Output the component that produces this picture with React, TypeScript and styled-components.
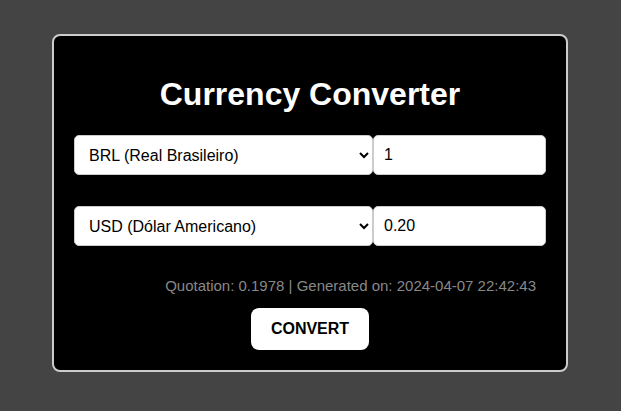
import React, { useState } from "react";
import styled, { createGlobalStyle } from "styled-components";

const GlobalStyle = createGlobalStyle`
  html, body {
    margin: 0;
    padding: 0;
    background: #444444;
    font-family: "Liberation Sans", Arial, sans-serif;
  }
`;

const Page = styled.div`
  padding: 34px 1px 0 0;
  display: flex;
  justify-content: center;
`;

const Card = styled.div`
  box-sizing: border-box;
  width: 516px;
  background: #000;
  border: 2px solid #cccccc;
  border-radius: 8px;
  padding: 20px 20px 20px;
  display: flex;
  flex-direction: column;
`;

const Title = styled.h1`
  margin: 20px 0 22px;
  color: #fff;
  font-size: 32px;
  font-weight: bold;
  text-align: center;
  line-height: 37px;
`;

const Row = styled.div<{ $gap: number }>`
  display: flex;
  margin-bottom: ${(p) => p.$gap}px;
`;

const Select = styled.select`
  box-sizing: border-box;
  flex: 0 0 299px;
  height: 40px;
  padding: 0 10px;
  font-family: "Liberation Sans", Arial, sans-serif;
  font-size: 16px;
  color: #000;
  background: #fff;
  border: 1px solid #cccccc;
  border-radius: 5px;
  outline: none;
`;

const Input = styled.input`
  box-sizing: border-box;
  flex: 1;
  min-width: 0;
  height: 40px;
  padding: 10px;
  font-family: "Liberation Sans", Arial, sans-serif;
  font-size: 16px;
  color: #000;
  background: #fff;
  border: 1px solid #cccccc;
  border-radius: 5px;
  outline: none;
`;

const Info = styled.p`
  margin: 0 10px 14px 0;
  text-align: right;
  color: #888888;
  font-size: 15px;
  line-height: 17px;
`;

const Button = styled.button`
  align-self: center;
  box-sizing: border-box;
  width: 118px;
  height: 42px;
  border: none;
  border-radius: 8px;
  background: #fff;
  color: #000;
  font-family: "Liberation Sans", Arial, sans-serif;
  font-size: 16px;
  font-weight: bold;
  cursor: pointer;
`;

export default function App() {
  const [from, setFrom] = useState("BRL");
  const [to, setTo] = useState("USD");
  const [amount, setAmount] = useState("1");
  const [result, setResult] = useState("0.20");

  return (
    <>
      <GlobalStyle />
      <Page>
        <Card>
          <Title>Currency Converter</Title>
          <Row $gap={31}>
            <Select value={from} onChange={(e) => setFrom(e.target.value)}>
              <option value="BRL">BRL (Real Brasileiro)</option>
              <option value="USD">USD (Dólar Americano)</option>
              <option value="EUR">EUR (Euro)</option>
            </Select>
            <Input value={amount} onChange={(e) => setAmount(e.target.value)} />
          </Row>
          <Row $gap={31}>
            <Select value={to} onChange={(e) => setTo(e.target.value)}>
              <option value="BRL">BRL (Real Brasileiro)</option>
              <option value="USD">USD (Dólar Americano)</option>
              <option value="EUR">EUR (Euro)</option>
            </Select>
            <Input value={result} onChange={(e) => setResult(e.target.value)} />
          </Row>
          <Info>Quotation: 0.1978 | Generated on: 2024-04-07 22:42:43</Info>
          <Button>CONVERT</Button>
        </Card>
      </Page>
    </>
  );
}
